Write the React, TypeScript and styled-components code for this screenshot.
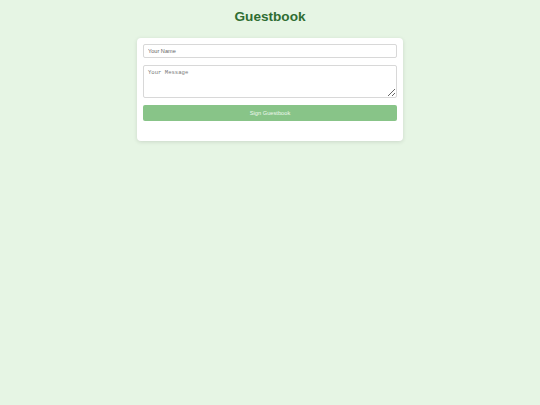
import styled, { createGlobalStyle } from 'styled-components';

const GlobalStyle = createGlobalStyle`
  html, body {
    margin: 0;
    padding: 0;
    background-color: #e6f5e4;
    font-family: 'Liberation Sans', Arial, sans-serif;
  }
`;

export default function App() {
  return (
    <>
      <GlobalStyle />
      <Page>
        <Title>Guestbook</Title>
        <Card>
          <NameInput type="text" placeholder="Your Name" />
          <MessageInput placeholder="Your Message" />
          <SignButton>Sign Guestbook</SignButton>
          <Entries />
        </Card>
      </Page>
    </>
  );
}

const Page = styled.div`
  display: flex;
  flex-direction: column;
  align-items: center;
  padding-top: 8px;
  min-height: 405px;
  box-sizing: border-box;
`;

const Title = styled.h1`
  margin: 0 0 13px;
  font-size: 13.6px;
  line-height: 17px;
  font-weight: bold;
  color: #2f6d32;
`;

const Card = styled.div`
  width: 266px;
  box-sizing: border-box;
  padding: 6px 6px 0;
  background: #fff;
  border-radius: 4px;
  box-shadow: 0 1px 4px rgba(0, 0, 0, 0.12);
  display: flex;
  flex-direction: column;
  gap: 7px;
`;

const NameInput = styled.input`
  height: 14px;
  box-sizing: border-box;
  padding: 0 4px;
  border: 1px solid #d8d8d8;
  border-radius: 2px;
  font-family: 'Liberation Sans', Arial, sans-serif;
  font-size: 5.6px;
  outline: none;

  &::placeholder {
    color: #666;
  }
`;

const MessageInput = styled.textarea`
  height: 33px;
  box-sizing: border-box;
  padding: 3px 4px;
  border: 1px solid #d8d8d8;
  border-radius: 2px;
  font-family: 'Liberation Mono', 'Courier New', monospace;
  font-size: 5.6px;
  outline: none;

  &::placeholder {
    color: #777;
  }
`;

const SignButton = styled.button`
  height: 16px;
  border: none;
  border-radius: 2px;
  background-color: #88c488;
  color: #eef8ee;
  font-family: 'Liberation Sans', Arial, sans-serif;
  font-size: 5.7px;
  cursor: pointer;
`;

const Entries = styled.div`
  height: 13px;
`;
